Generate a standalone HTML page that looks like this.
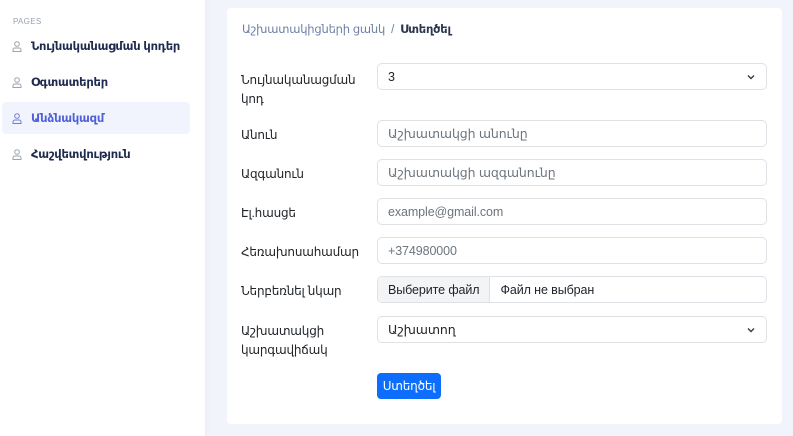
<!DOCTYPE html>
<html><head><meta charset="utf-8"><style>
*{box-sizing:border-box;margin:0;padding:0}
body{width:793px;height:436px;overflow:hidden;background:#f1f4fb;font-family:"Liberation Sans","DejaVu Sans",sans-serif;position:relative;color:#212529}
.side{position:absolute;left:0;top:0;width:205px;height:436px;background:#fff;box-shadow:1px 0 6px rgba(0,0,0,.04)}
.pages{position:absolute;left:13px;top:17px;font-size:8px;color:#9aa3b2;letter-spacing:.3px}
.nav{position:absolute;left:2px;width:188px;height:32px;font-size:11.5px;font-weight:bold;color:#1e2a4e;display:flex;align-items:center;padding-left:10px;border-radius:4px;white-space:nowrap;letter-spacing:-.2px}
.nav svg{margin-right:9px;flex:none}
.nav.act{background:#f1f4fd;color:#4f5fd8}
.card{position:absolute;left:227px;top:8px;width:555px;height:416px;background:#fff;border-radius:4px}
.bc{position:absolute;left:15px;top:14px;font-size:11.5px;color:#6c7fa3;letter-spacing:-.2px}
.bc b{color:#2b3550}
.lbl{position:absolute;left:14px;font-size:12px;line-height:19px;color:#212529;width:125px;letter-spacing:-.2px}
.in{position:absolute;left:150px;width:390px;height:27px;border:1px solid #dee2e6;border-radius:5px;font-size:12.5px;padding-left:10px;display:flex;align-items:center;color:#212529;letter-spacing:-.1px}
.ph{color:#6c757d}
.chev{position:absolute;right:10px;top:8px}
.fb{height:100%;display:flex;align-items:center;background:#f3f4f6;border-right:1px solid #dee2e6;margin-left:-10px;padding:0 10px;margin-right:10px;border-radius:5px 0 0 5px}
.btn{position:absolute;left:150px;top:365px;width:64px;height:26px;background:#0d6efd;color:#fff;border-radius:4px;font-size:12px;display:flex;align-items:center;justify-content:center;letter-spacing:-.2px}
</style></head><body>
<div class="side">
<div class="pages">PAGES</div>
<div class="nav" style="top:30px"><svg width="10" height="11" viewBox="0 0 10 11" fill="none" stroke="#9aa3b2" stroke-width="1"><circle cx="5" cy="3" r="2.3"/><path d="M1 10.5v-1.5a2 2 0 0 1 2-2h4a2 2 0 0 1 2 2v1.5z"/></svg>Նույնականացման կոդեր</div>
<div class="nav" style="top:66px"><svg width="10" height="11" viewBox="0 0 10 11" fill="none" stroke="#9aa3b2" stroke-width="1"><circle cx="5" cy="3" r="2.3"/><path d="M1 10.5v-1.5a2 2 0 0 1 2-2h4a2 2 0 0 1 2 2v1.5z"/></svg>Օգտատերեր</div>
<div class="nav act" style="top:102px"><svg width="10" height="11" viewBox="0 0 10 11" fill="none" stroke="#6f7ed8" stroke-width="1"><circle cx="5" cy="3" r="2.3"/><path d="M1 10.5v-1.5a2 2 0 0 1 2-2h4a2 2 0 0 1 2 2v1.5z"/></svg>Անձնակազմ</div>
<div class="nav" style="top:138px"><svg width="10" height="11" viewBox="0 0 10 11" fill="none" stroke="#9aa3b2" stroke-width="1"><circle cx="5" cy="3" r="2.3"/><path d="M1 10.5v-1.5a2 2 0 0 1 2-2h4a2 2 0 0 1 2 2v1.5z"/></svg>Հաշվետվություն</div>
</div>
<div class="card">
<div class="bc">Աշխատակիցների ցանկ &nbsp;/&nbsp; <b>Ստեղծել</b></div>
<div class="lbl" style="top:63px">Նույնականացման կոդ</div>
<div class="in" style="top:55px">3<svg class="chev" width="10" height="10" viewBox="0 0 10 10" fill="none" stroke="#343a40" stroke-width="1.4"><path d="M2 3.5l3 3 3-3"/></svg></div>
<div class="lbl" style="top:118px">Անուն</div>
<div class="in ph" style="top:112px">Աշխատակցի անունը</div>
<div class="lbl" style="top:157px">Ազգանուն</div>
<div class="in ph" style="top:151px">Աշխատակցի ազգանունը</div>
<div class="lbl" style="top:196px">Էլ.հասցե</div>
<div class="in ph" style="top:190px">example@gmail.com</div>
<div class="lbl" style="top:235px">Հեռախոսահամար</div>
<div class="in ph" style="top:229px">+374980000</div>
<div class="lbl" style="top:274px">Ներբեռնել նկար</div>
<div class="in" style="top:268px"><span class="fb">Выберите файл</span>Файл не выбран</div>
<div class="lbl" style="top:314px">Աշխատակցի կարգավիճակ</div>
<div class="in" style="top:308px">Աշխատող<svg class="chev" width="10" height="10" viewBox="0 0 10 10" fill="none" stroke="#343a40" stroke-width="1.4"><path d="M2 3.5l3 3 3-3"/></svg></div>
<div class="btn">Ստեղծել</div>
</div>
</body></html>
